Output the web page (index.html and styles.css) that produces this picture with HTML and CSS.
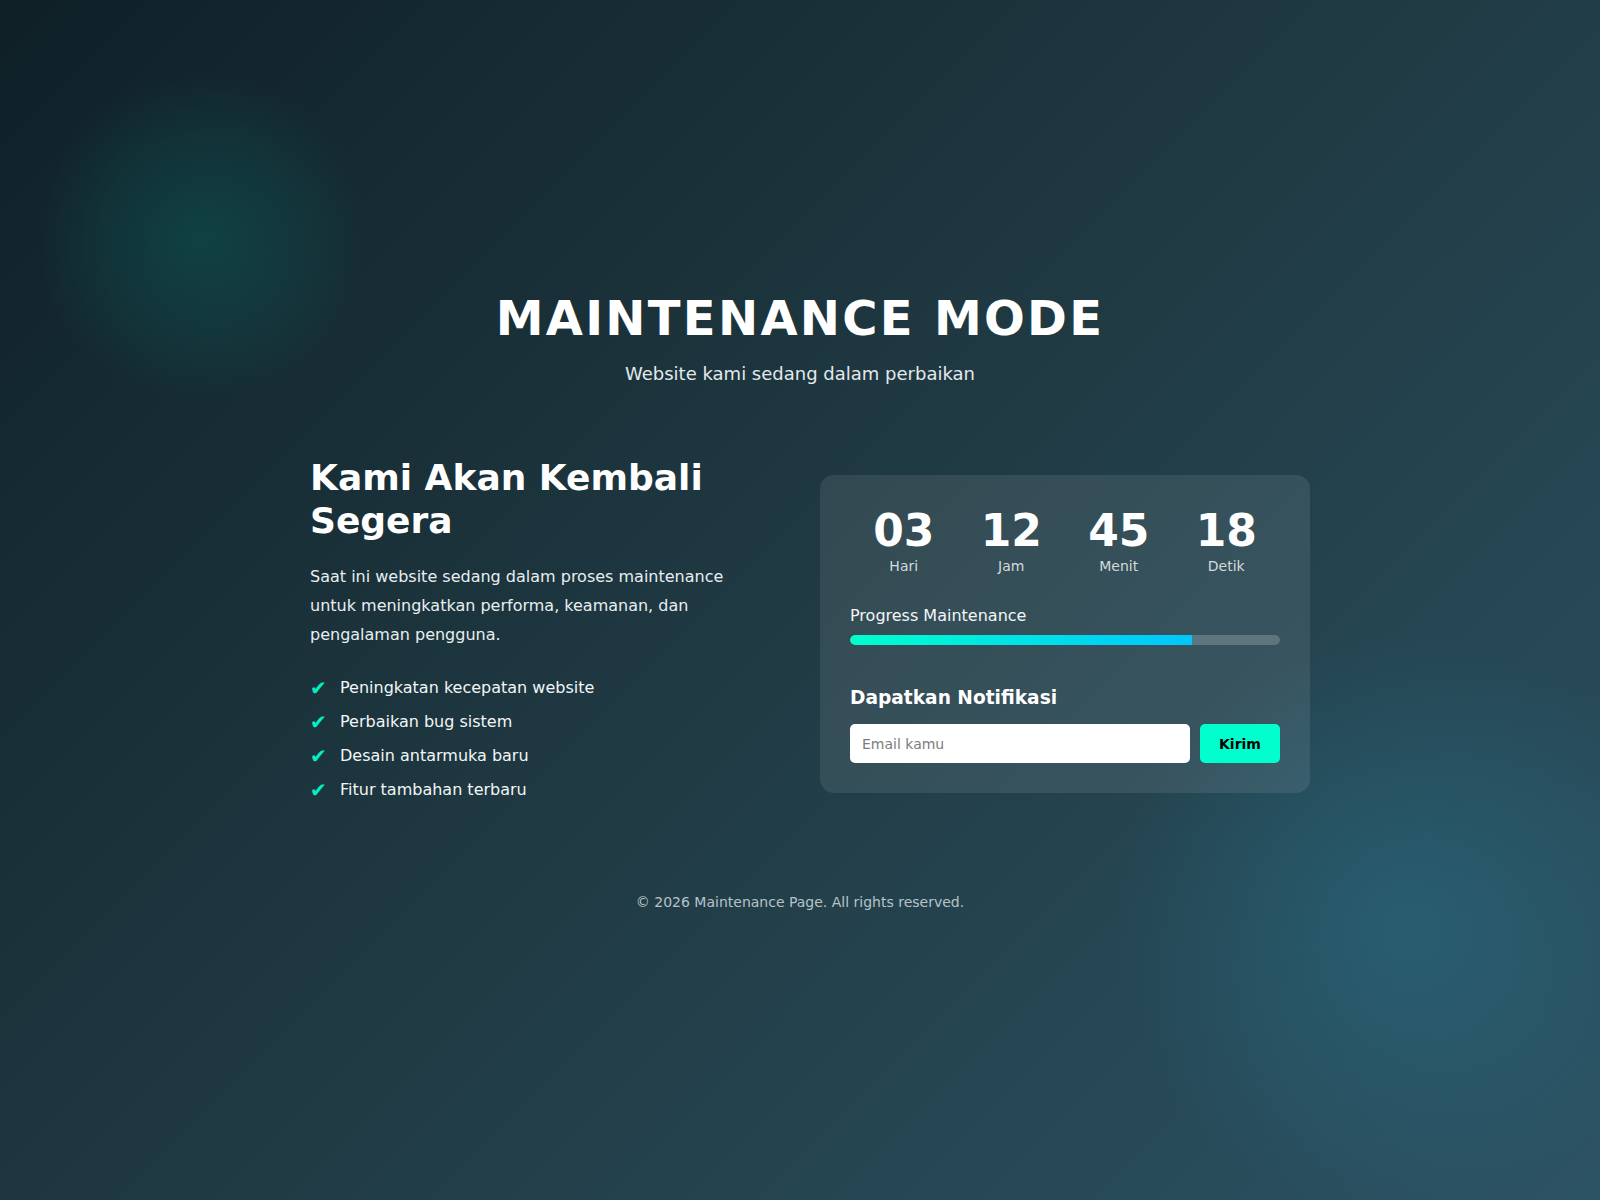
FILE: index.html
```html
<!DOCTYPE html>
<html lang="id">
<head>
<meta charset="utf-8">
<title>Maintenance Mode</title>
<link rel="stylesheet" href="styles.css">
</head>
<body>
<div class="page">
  <header class="hero">
    <h1 class="hero-title">MAINTENANCE MODE</h1>
    <p class="hero-sub">Website kami sedang dalam perbaikan</p>
  </header>

  <main class="content">
    <section class="info">
      <h2 class="info-title">Kami Akan Kembali Segera</h2>
      <p class="info-text">Saat ini website sedang dalam proses maintenance untuk meningkatkan performa, keamanan, dan pengalaman pengguna.</p>
      <ul class="features">
        <li class="feature"><span class="check">✔</span>Peningkatan kecepatan website</li>
        <li class="feature"><span class="check">✔</span>Perbaikan bug sistem</li>
        <li class="feature"><span class="check">✔</span>Desain antarmuka baru</li>
        <li class="feature"><span class="check">✔</span>Fitur tambahan terbaru</li>
      </ul>
    </section>

    <section class="card">
      <div class="countdown">
        <div class="unit"><span class="num">03</span><span class="label">Hari</span></div>
        <div class="unit"><span class="num">12</span><span class="label">Jam</span></div>
        <div class="unit"><span class="num">45</span><span class="label">Menit</span></div>
        <div class="unit"><span class="num">18</span><span class="label">Detik</span></div>
      </div>

      <div class="progress">
        <div class="progress-label">Progress Maintenance</div>
        <div class="progress-track"><div class="progress-fill" style="width: 79.6%"></div></div>
      </div>

      <div class="notify">
        <h3 class="notify-title">Dapatkan Notifikasi</h3>
        <form class="notify-form">
          <input class="notify-input" type="email" placeholder="Email kamu">
          <button class="notify-btn" type="button">Kirim</button>
        </form>
      </div>
    </section>
  </main>

  <footer class="footer">© 2026 Maintenance Page. All rights reserved.</footer>
</div>
</body>
</html>
```

FILE: styles.css
```css
* { box-sizing: border-box; }

html, body {
  margin: 0;
  padding: 0;
}

body {
  font-family: "DejaVu Sans", Verdana, sans-serif;
  color: #ffffff;
  background:
    radial-gradient(circle at 202px 238px, rgba(10, 100, 95, 0.42) 0, rgba(10, 100, 95, 0.2) 100px, rgba(10, 100, 95, 0) 165px),
    radial-gradient(circle at 1405px 925px, rgba(40, 120, 145, 0.42) 0, rgba(40, 120, 145, 0.18) 170px, rgba(40, 120, 145, 0) 290px),
    linear-gradient(135deg, #0f2027 0%, #203a43 50%, #2c5364 100%);
  min-height: 1200px;
}

.page {
  min-height: 1200px;
  padding-top: 290px;
  display: flex;
  flex-direction: column;
  align-items: center;
}

.hero {
  text-align: center;
  margin-bottom: 69px;
}

.hero-title {
  margin: 0;
  font-size: 48px;
  line-height: 1.2;
  font-weight: 700;
  letter-spacing: 2.3px;
}

.hero-sub {
  margin: 12px 0 0;
  font-size: 18px;
  line-height: 1.5;
  color: #e3e9ec;
}

.content {
  width: 1020px;
  padding-left: 20px;
  display: grid;
  grid-template-columns: 450px 490px;
  column-gap: 60px;
  align-items: start;
}

.info-title {
  margin: 0 0 21px;
  font-size: 36px;
  line-height: 1.2;
  font-weight: 700;
}

.info-text {
  margin: 0 0 28px;
  font-size: 16px;
  line-height: 1.8;
  color: #e8eef0;
}

.features {
  list-style: none;
  margin: 0;
  padding: 0;
}

.feature {
  display: flex;
  align-items: center;
  font-size: 16px;
  line-height: 22px;
  margin-bottom: 12px;
  color: #f2f6f7;
}

.feature:last-child { margin-bottom: 0; }

.check {
  color: #00f0c4;
  width: 30px;
  flex: none;
  font-size: 20px;
  line-height: 22px;
}

.card {
  margin-top: 19px;
  background: rgba(255, 255, 255, 0.09);
  border-radius: 14px;
  padding: 30px;
}

.countdown {
  display: grid;
  grid-template-columns: repeat(4, 1fr);
  text-align: center;
  margin-bottom: 28px;
}

.unit {
  display: flex;
  flex-direction: column;
  align-items: center;
}

.num {
  font-size: 44px;
  font-weight: 700;
  line-height: 52.8px;
}

.label {
  font-size: 14px;
  line-height: 1.4;
  color: #d2dade;
}

.progress-label {
  font-size: 16px;
  line-height: 1.4;
  margin-bottom: 8px;
  color: #f2f6f7;
}

.progress-track {
  height: 10px;
  border-radius: 5px;
  background: rgba(255, 255, 255, 0.2);
  overflow: hidden;
}

.progress-fill {
  height: 100%;
  background: linear-gradient(90deg, #00ffcc, #00c6ff);
  border-radius: 5px 0 0 5px;
}

.notify {
  margin-top: 40px;
}

.notify-title {
  margin: 0 0 13px;
  font-size: 18.6px;
  line-height: 26px;
  font-weight: 700;
}

.notify-form {
  display: flex;
  gap: 10px;
}

.notify-input {
  flex: 1;
  height: 39px;
  border: none;
  border-radius: 5px;
  padding: 0 12px;
  font-family: "DejaVu Sans", Verdana, sans-serif;
  font-size: 14px;
  color: #333;
  background: #fff;
  outline: none;
}

.notify-input::placeholder { color: #7d7d7d; }

.notify-btn {
  width: 80px;
  height: 39px;
  border: none;
  border-radius: 5px;
  background: #00ffcc;
  color: #000;
  font-family: "DejaVu Sans", Verdana, sans-serif;
  font-size: 14px;
  font-weight: 700;
  cursor: pointer;
}

.footer {
  margin-top: 91px;
  font-size: 14px;
  line-height: 20px;
  color: #b7c3c8;
  text-align: center;
}
```
